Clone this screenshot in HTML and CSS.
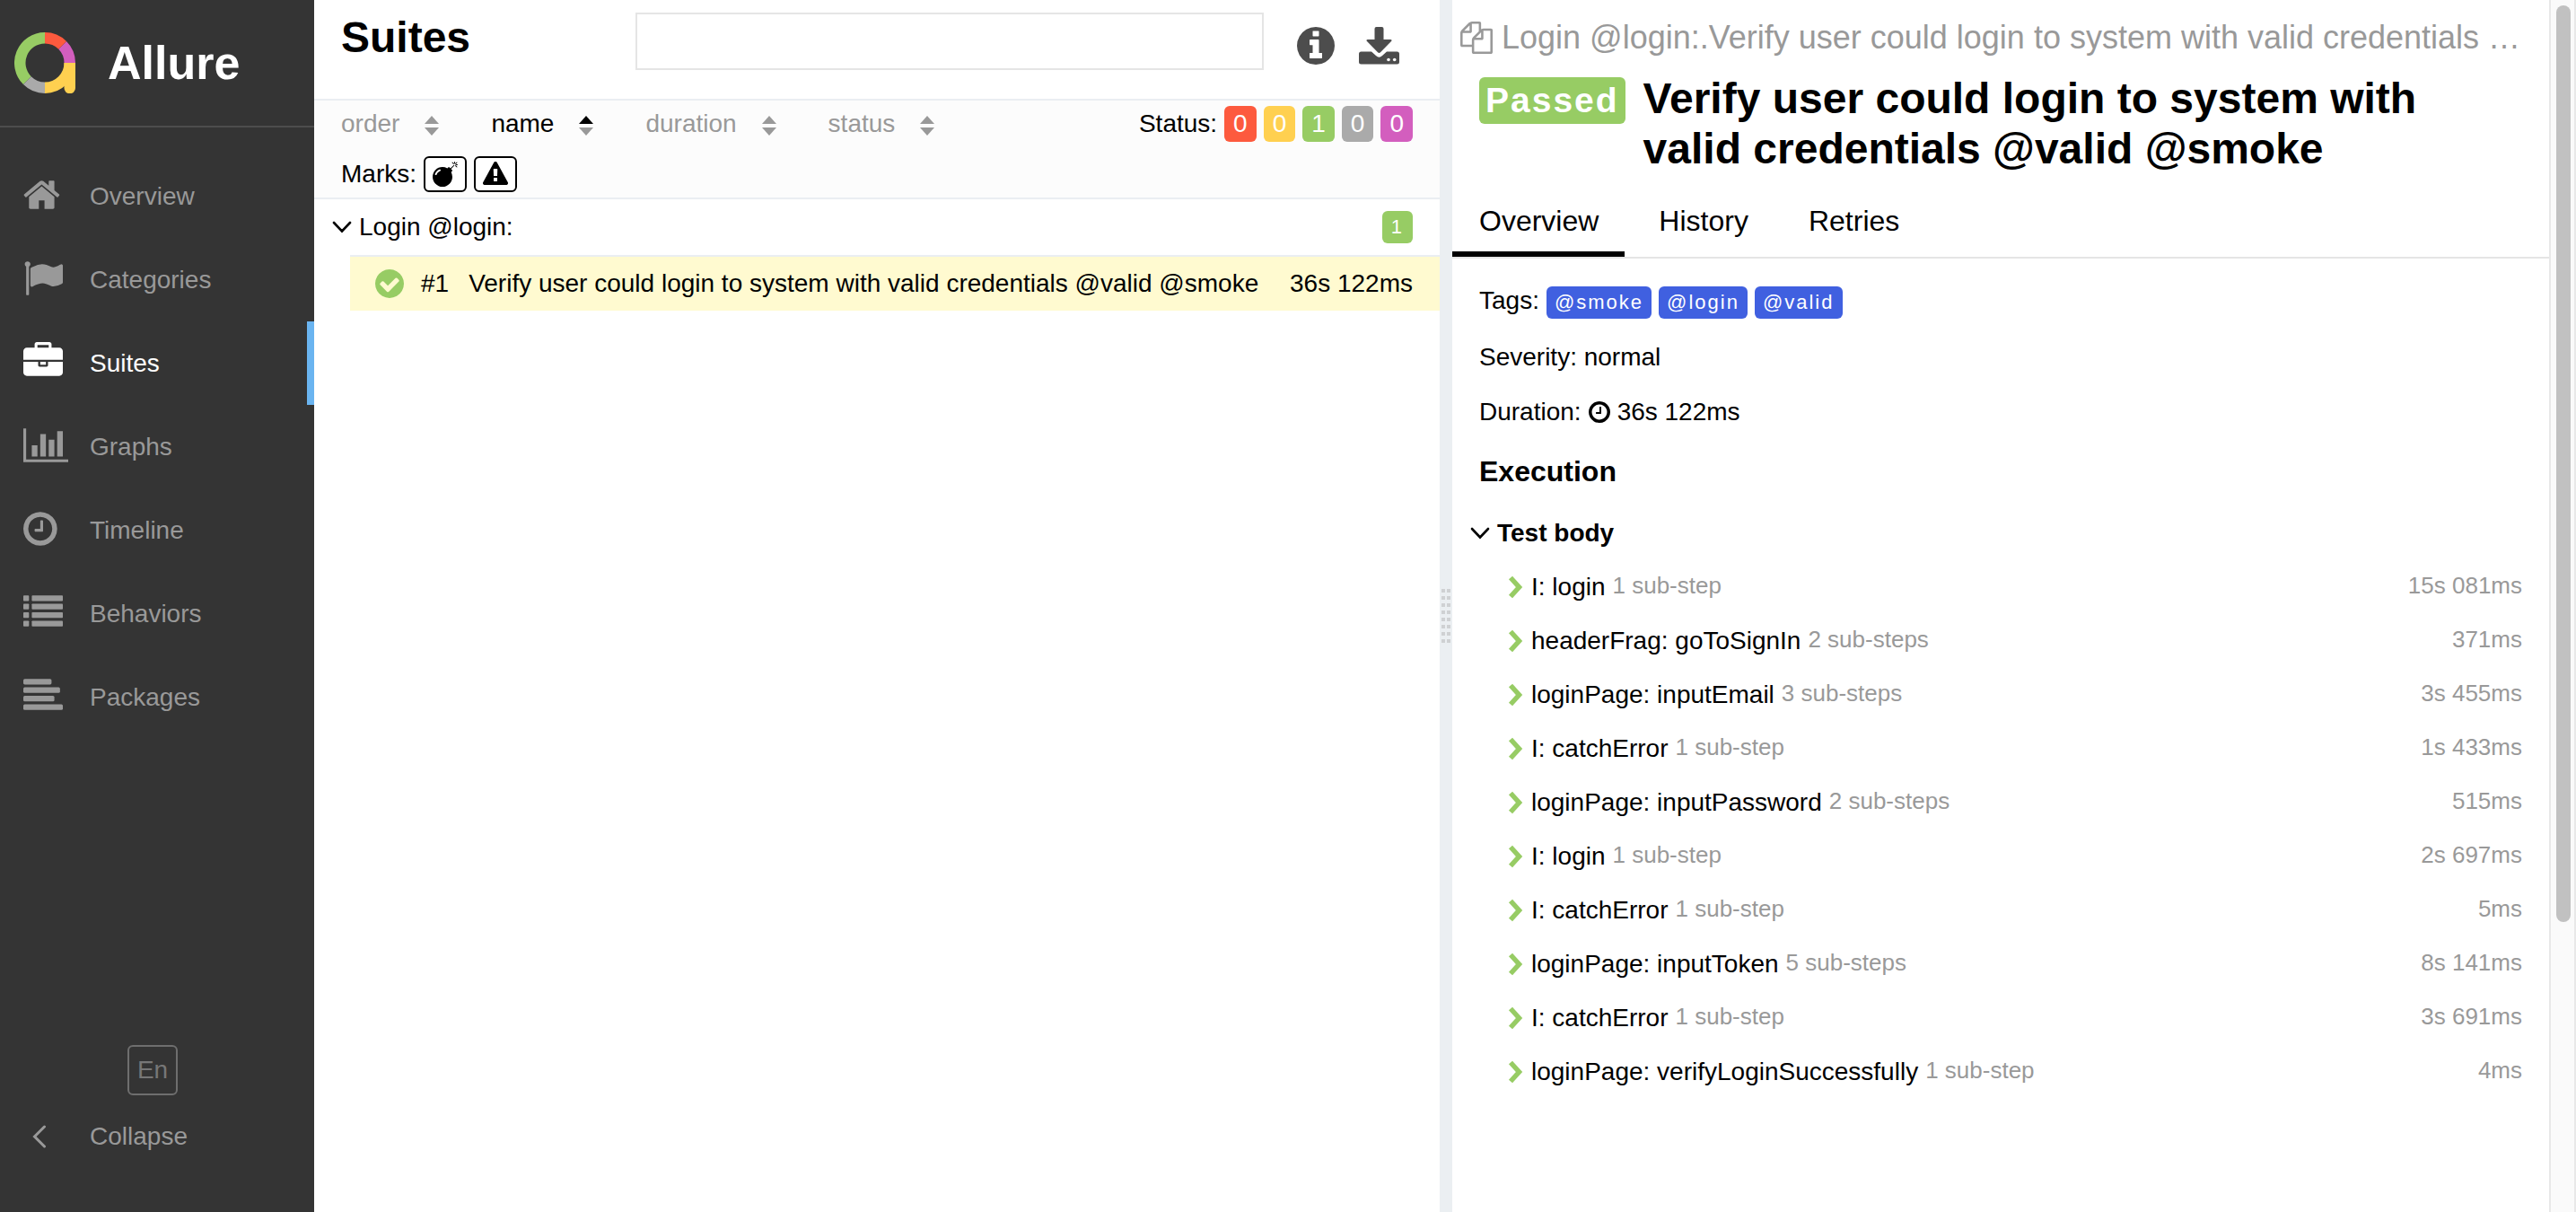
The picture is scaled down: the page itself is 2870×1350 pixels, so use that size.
FILE: index.html
```html
<!DOCTYPE html>
<html lang="en">
<head>
<meta charset="utf-8">
<title>Allure Report</title>
<meta name="viewport" content="width=device-width, initial-scale=1">
<link rel="stylesheet" href="styles.css">
</head>
<body>
<svg class="sprite" aria-hidden="true">
  <symbol id="angle-down" viewBox="0 0 22 14"><path d="M2 2l9 9.500l9-9.500" fill="none" stroke="currentColor" stroke-width="2.600" stroke-linecap="round"/></symbol>
  <symbol id="chevron" viewBox="0 0 18 26"><path d="M3 2.500L12.500 13L3 23.500" fill="none" stroke="currentColor" stroke-width="5.500"/></symbol>
  <symbol id="clock" viewBox="128 0 1792 1792"><path d="M1024 544v448q0 14-9 23t-23 9h-320q-14 0-23-9t-9-23v-64q0-14 9-23t23-9h224v-352q0-14 9-23t23-9h64q14 0 23 9t9 23zm416 352q0-148-73-273t-198-198-273-73-273 73-198 198-73 273 73 273 198 198 273 73 273-73 198-198 73-273zm224 0q0 209-103 385.500t-279.500 279.500-385.500 103-385.500-103-279.500-279.500-103-385.500 103-385.500 279.500-279.500 385.500-103 385.500 103 279.500 279.500 103 385.500z"/></symbol>
  <symbol id="sort" viewBox="0 0 16 22"><path d="M8 0l8 9H0z"/><path d="M8 22l8-9H0z"/></symbol>
</svg>
<div class="app">
  <aside class="side">
    <div class="brand">
      <svg class="brand-logo" viewBox="0 0 68 68" aria-hidden="true">
        <g fill="none" stroke-width="12.500">
          <path stroke="#97cc64" d="M34 6.250A27.750 27.750 0 0 0 14.380 53.620"/>
          <path stroke="#aaa" d="M14.380 53.620A27.750 27.750 0 0 0 34 61.750"/>
          <path stroke="#ffd050" d="M34 61.750A27.750 27.750 0 0 0 61.750 34"/>
          <path stroke="#d35ebe" d="M61.750 34A27.750 27.750 0 0 0 53.620 14.380"/>
          <path stroke="#fd5a3e" d="M53.620 14.380A27.750 27.750 0 0 0 34 6.250"/>
        </g>
        <path fill="#ffd050" d="M55.500 34H68v28a6.250 6.250 0 0 1-12.500 0z"/>
      </svg>
      <span class="brand-name">Allure</span>
    </div>
    <nav class="nav">
      <a class="nav-item" href="#overview">
        <svg class="nav-icon" viewBox="64 0 1792 1792" aria-hidden="true"><path d="M1472 992v480q0 26-19 45t-45 19h-384v-384h-256v384h-384q-26 0-45-19t-19-45v-480q0-1 .5-3t.5-3l575-474 575 474q1 2 1 6zm223-69l-62 74q-8 9-21 11h-3q-13 0-21-7l-692-577-692 577q-12 8-24 7-13-2-21-11l-62-74q-8-10-7-23.500t11-21.500l719-599q32-26 76-26t76 26l244 204v-195q0-14 9-23t23-9h192q14 0 23 9t9 23v408l219 182q10 8 11 21.500t-7 23.500z"/></svg>
        <span>Overview</span></a>
      <a class="nav-item" href="#categories">
        <svg class="nav-icon" viewBox="0 0 1792 1792" aria-hidden="true"><path d="M320 256q0 72-64 110v1266q0 13-9.500 22.500t-22.500 9.500h-64q-13 0-22.500-9.500t-9.500-22.500v-1266q-64-38-64-110 0-53 37.500-90.500t90.500-37.500 90.500 37.500 37.500 90.500zm1472 64v763q0 25-12.500 38.500t-39.500 27.500q-215 116-369 116-61 0-123.500-22t-108.500-48-115.500-48-142.500-22q-192 0-464 146-17 9-33 9-26 0-45-19t-19-45v-742q0-32 31-55 21-14 79-43 236-120 421-120 107 0 200 29t219 88q38 19 88 19 54 0 117.500-21t110-47 88-47 54.500-21q26 0 45 19t19 45z"/></svg>
        <span>Categories</span></a>
      <a class="nav-item nav-item-active" href="#suites" aria-current="page">
        <svg class="nav-icon" viewBox="0 0 1792 1792" aria-hidden="true"><path d="M640 256h512v-128h-512v128zm1152 640v480q0 66-47 113t-113 47h-1472q-66 0-113-47t-47-113v-480h672v160q0 26 19 45t45 19h320q26 0 45-19t19-45v-160h672zm-768 0v128h-256v-128h256zm768-480v384h-1792v-384q0-66 47-113t113-47h352v-160q0-40 28-68t68-28h576q40 0 68 28t28 68v160h352q66 0 113 47t47 113z"/></svg>
        <span>Suites</span></a>
      <a class="nav-item" href="#graphs">
        <svg class="nav-icon" viewBox="0 0 2048 1792" aria-hidden="true"><path d="M0 128h128v1408h1920v128H0zM384 896h256v512H384zM768 384h256v1024H768zM1152 640h256v768h-256zM1536 256h256v1152h-256z"/></svg>
        <span>Graphs</span></a>
      <a class="nav-item" href="#timeline">
        <svg class="nav-icon" viewBox="128 0 1792 1792" aria-hidden="true"><use href="#clock" x="128" y="0" width="1792" height="1792"/></svg>
        <span>Timeline</span></a>
      <a class="nav-item" href="#behaviors">
        <svg class="nav-icon" viewBox="0 0 1792 1792" aria-hidden="true"><rect y="128" width="256" height="256" rx="32"/><rect x="384" y="128" width="1408" height="256" rx="32"/><rect y="512" width="256" height="256" rx="32"/><rect x="384" y="512" width="1408" height="256" rx="32"/><rect y="896" width="256" height="256" rx="32"/><rect x="384" y="896" width="1408" height="256" rx="32"/><rect y="1280" width="256" height="256" rx="32"/><rect x="384" y="1280" width="1408" height="256" rx="32"/></svg>
        <span>Behaviors</span></a>
      <a class="nav-item" href="#packages">
        <svg class="nav-icon" viewBox="0 0 1792 1792" aria-hidden="true"><rect y="128" width="1280" height="256" rx="64"/><rect y="512" width="1664" height="256" rx="64"/><rect y="896" width="1408" height="256" rx="64"/><rect y="1280" width="1792" height="256" rx="64"/></svg>
        <span>Packages</span></a>
    </nav>
    <div class="side-footer">
      <button class="lang" type="button">En</button>
      <button class="collapse" type="button">
        <svg class="collapse-icon" viewBox="0 0 16 26" aria-hidden="true"><path d="M13.500 2L2.500 13l11 11" fill="none" stroke="currentColor" stroke-width="3" stroke-linecap="round"/></svg>
        <span>Collapse</span></button>
    </div>
  </aside>

  <div class="content">
    <main class="tree">
      <header class="tree-header">
        <h1 class="tree-title">Suites</h1>
        <input class="search" type="search" aria-label="Search">
        <div class="tools">
          <button class="tool" type="button" aria-label="Show info">
            <svg class="info-icon" viewBox="128 128 1536 1536"><path d="M1152 1376v-160q0-14-9-23t-23-9h-96v-512q0-14-9-23t-23-9h-320q-14 0-23 9t-9 23v160q0 14 9 23t23 9h96v320h-96q-14 0-23 9t-9 23v160q0 14 9 23t23 9h448q14 0 23-9t9-23zm-128-896v-160q0-14-9-23t-23-9h-192q-14 0-23 9t-9 23v160q0 14 9 23t23 9h192q14 0 23-9t9-23zm640 416q0 209-103 385.500t-279.500 279.500-385.500 103-385.500-103-279.500-279.500-103-385.500 103-385.500 279.500-279.500 385.500-103 385.500 103 279.500 279.500 103 385.500z"/></svg></button>
          <button class="tool" type="button" aria-label="Download">
            <svg class="download-icon" viewBox="0 0 45 42"><path d="M2.500 27.500H14l5 4.600q3.500 3.300 7 0l5-4.600h11.500a2.500 2.500 0 0 1 2.500 2.500v9a2.500 2.500 0 0 1-2.500 2.500h-40A2.500 2.500 0 0 1 0 39v-9a2.500 2.500 0 0 1 2.500-2.500z"/><path d="M19.500 0h6a2 2 0 0 1 2 2v12H35q2.500.2 1 2L24 28.300q-1.500 1.400-3 0L9 16q-1.500-1.800 1-2h7.500V2a2 2 0 0 1 2-2z"/><circle cx="33" cy="36.500" r="1.800" fill="#fff"/><circle cx="39.700" cy="36.500" r="1.800" fill="#fff"/></svg></button>
        </div>
      </header>
      <section class="filters">
        <div class="filter-row">
          <div class="sorter">
            <button class="sort" type="button">order <svg class="sort-icon" aria-hidden="true"><use href="#sort"/></svg></button>
            <button class="sort sort-active" type="button">name <svg class="sort-icon" aria-hidden="true" viewBox="0 0 16 22"><path fill="#000" d="M8 0l8 9H0z"/><path d="M8 22l8-9H0z"/></svg></button>
            <button class="sort" type="button">duration <svg class="sort-icon" aria-hidden="true"><use href="#sort"/></svg></button>
            <button class="sort" type="button">status <svg class="sort-icon" aria-hidden="true"><use href="#sort"/></svg></button>
          </div>
          <div class="filter-group">
            <span>Status:</span>
            <button class="count failed" type="button" aria-label="Failed">0</button>
            <button class="count broken" type="button" aria-label="Broken">0</button>
            <button class="count passed" type="button" aria-label="Passed">1</button>
            <button class="count skipped" type="button" aria-label="Skipped">0</button>
            <button class="count unknown" type="button" aria-label="Unknown">0</button>
          </div>
        </div>
        <div class="filter-group">
          <span>Marks:</span>
          <button class="mark" type="button" aria-label="Flaky"><svg class="mark-icon" viewBox="0 0 1792 1792"><path d="M571 589q-10-25-34-35t-49 0q-108 44-191 127t-127 191q-10 25 0 49t35 34q13 5 24 5 42 0 60-40 34-84 98.500-148.500t148.500-98.500q25-11 35-35t0-49zm942-356l46 46-244 243 68 68q19 19 19 45.500t-19 45.500l-64 64q89 161 89 343 0 143-55.500 273.500t-150 225-225 150-273.500 55.500-273.500-55.500-225-150-150-225-55.500-273.500 55.500-273.500 150-225 225-150 273.500-55.500q182 0 343 89l64-64q19-19 45.500-19t45.500 19l68 68zm8-56q-10 10-22 10-13 0-23-10l-91-90q-9-10-9-23t9-23q10-9 23-9t23 9l90 91q10 9 10 22.500t-10 22.500zm230 230q-11 9-23 9t-23-9l-90-91q-10-9-10-22.500t10-22.500q9-10 22.500-10t22.500 10l91 90q9 10 9 23t-9 23zm41-183q0 14-9 23t-23 9h-96q-14 0-23-9t-9-23 9-23 23-9h96q14 0 23 9t9 23zm-192-192v96q0 14-9 23t-23 9-23-9-9-23v-96q0-14 9-23t23-9 23 9 9 23zm151 55l-91 90q-10 10-22 10-13 0-23-10-10-9-10-22.500t10-22.500l90-91q10-9 23-9t23 9q9 10 9 23t-9 23z"/></svg></button>
          <button class="mark" type="button" aria-label="New failed"><svg class="mark-icon" viewBox="0 0 1792 1792"><path d="M1024 1375v-190q0-14-9.500-23.500t-22.500-9.500h-192q-13 0-22.500 9.500t-9.500 23.500v190q0 14 9.500 23.500t22.500 9.500h192q13 0 22.500-9.500t9.500-23.500zm-2-374l18-459q0-12-10-19-13-11-24-11h-220q-11 0-24 11-10 7-10 21l17 457q0 10 10 16.500t24 6.500h185q14 0 23.500-6.500t10.500-16.500zm-14-934l768 1408q35 63-2 126-17 29-46.500 46t-63.500 17h-1536q-34 0-63.500-17t-46.500-46q-37-63-2-126l768-1408q17-31 47-49t65-18 65 18 47 49z"/></svg></button>
        </div>
      </section>
      <section class="suite">
        <button class="suite-head" type="button" aria-expanded="true">
          <svg class="angle" aria-hidden="true"><use href="#angle-down"/></svg>
          <span class="suite-name">Login @login:</span>
          <span class="label suite-count passed">1</span>
        </button>
        <a class="case" href="#suites/case">
          <svg class="case-icon" viewBox="128 128 1536 1536" aria-hidden="true"><path d="M1412 734q0-28-18-46l-91-90q-19-19-45-19t-45 19l-408 407-226-226q-19-19-45-19t-45 19l-91 90q-18 18-18 46 0 27 18 45l362 362q19 19 45 19 27 0 46-19l543-543q18-18 18-45zm252 162q0 209-103 385.500t-279.500 279.500-385.500 103-385.500-103-279.500-279.500-103-385.500 103-385.500 279.500-279.500 385.500-103 385.500 103 279.500 279.500 103 385.500z"/></svg>
          <span class="case-order">#1</span>
          <span class="case-name">Verify user could login to system with valid credentials @valid @smoke</span>
          <span>36s 122ms</span>
        </a>
      </section>
    </main>

    <div class="gutter"><div class="grip"></div></div>

    <article class="result">
      <div class="crumb">
        <svg class="crumb-icon" viewBox="0 0 1792 1792" aria-hidden="true"><path d="M1696 384q40 0 68 28t28 68v1216q0 40-28 68t-68 28h-960q-40 0-68-28t-28-68v-288h-544q-40 0-68-28t-28-68v-672q0-40 20-88t48-76l408-408q28-28 76-48t88-20h416q40 0 68 28t28 68v328q68-40 128-40h416zm-544 213l-299 299h299v-299zm-640-384l-299 299h299v-299zm196 647l316-316v-416h-384v416q0 40-28 68t-68 28h-416v640h512v-256q0-40 20-88t48-76zm956 804v-1152h-384v416q0 40-28 68t-68 28h-416v640h896z"/></svg>
        <span class="crumb-text">Login @login:.Verify user could login to system with valid credentials @valid @smoke</span>
      </div>
      <div class="result-head">
        <span class="result-status passed">Passed</span>
        <h2 class="result-title">Verify user could login to system with valid credentials @valid @smoke</h2>
      </div>
      <nav class="tabs">
        <a class="tab tab-active" href="#tab-overview" aria-current="page">Overview</a>
        <a class="tab" href="#tab-history">History</a>
        <a class="tab" href="#tab-retries">Retries</a>
      </nav>
      <div class="facts">
        <div class="fact">Tags: <span class="label tag">@smoke</span><span class="label tag">@login</span><span class="label tag">@valid</span></div>
        <div class="fact">Severity: normal</div>
        <div class="fact">Duration: <svg class="fact-icon" viewBox="128 128 1536 1536" aria-hidden="true"><use href="#clock" x="128" y="0" width="1792" height="1792"/></svg> 36s 122ms</div>
      </div>
      <h3 class="execution">Execution</h3>
      <button class="stage" type="button" aria-expanded="true"><svg class="angle" aria-hidden="true"><use href="#angle-down"/></svg>Test body</button>
      <ul class="steps">
        <li><button class="step" type="button"><svg class="step-icon" aria-hidden="true"><use href="#chevron"/></svg><span>I: login</span><span class="minor">1 sub-step</span><span class="minor time">15s 081ms</span></button></li>
        <li><button class="step" type="button"><svg class="step-icon" aria-hidden="true"><use href="#chevron"/></svg><span>headerFrag: goToSignIn</span><span class="minor">2 sub-steps</span><span class="minor time">371ms</span></button></li>
        <li><button class="step" type="button"><svg class="step-icon" aria-hidden="true"><use href="#chevron"/></svg><span>loginPage: inputEmail</span><span class="minor">3 sub-steps</span><span class="minor time">3s 455ms</span></button></li>
        <li><button class="step" type="button"><svg class="step-icon" aria-hidden="true"><use href="#chevron"/></svg><span>I: catchError</span><span class="minor">1 sub-step</span><span class="minor time">1s 433ms</span></button></li>
        <li><button class="step" type="button"><svg class="step-icon" aria-hidden="true"><use href="#chevron"/></svg><span>loginPage: inputPassword</span><span class="minor">2 sub-steps</span><span class="minor time">515ms</span></button></li>
        <li><button class="step" type="button"><svg class="step-icon" aria-hidden="true"><use href="#chevron"/></svg><span>I: login</span><span class="minor">1 sub-step</span><span class="minor time">2s 697ms</span></button></li>
        <li><button class="step" type="button"><svg class="step-icon" aria-hidden="true"><use href="#chevron"/></svg><span>I: catchError</span><span class="minor">1 sub-step</span><span class="minor time">5ms</span></button></li>
        <li><button class="step" type="button"><svg class="step-icon" aria-hidden="true"><use href="#chevron"/></svg><span>loginPage: inputToken</span><span class="minor">5 sub-steps</span><span class="minor time">8s 141ms</span></button></li>
        <li><button class="step" type="button"><svg class="step-icon" aria-hidden="true"><use href="#chevron"/></svg><span>I: catchError</span><span class="minor">1 sub-step</span><span class="minor time">3s 691ms</span></button></li>
        <li><button class="step" type="button"><svg class="step-icon" aria-hidden="true"><use href="#chevron"/></svg><span>loginPage: verifyLoginSuccessfully</span><span class="minor">1 sub-step</span><span class="minor time">4ms</span></button></li>
      </ul>
    </article>
    <div class="scroll"><div class="scroll-thumb"></div></div>
  </div>
</div>
</body>
</html>
```
FILE: styles.css
```css
*,
*::before,
*::after {
  box-sizing: border-box;
}

body {
  margin: 0;
  background: #fff;
  color: #000;
  font: 28px/36px "Liberation Sans", Arial, Helvetica, sans-serif;
}

h1,
h2,
h3,
ul {
  margin: 0;
  padding: 0;
}

ul {
  list-style: none;
}

a {
  color: inherit;
  text-decoration: none;
}

button {
  margin: 0;
  padding: 0;
  border: 0;
  background: none;
  color: inherit;
  font: inherit;
  text-align: left;
  cursor: pointer;
}

svg {
  display: block;
  flex: none;
  fill: currentColor;
}

.sprite {
  position: absolute;
  width: 0;
  height: 0;
}

.app {
  display: flex;
  min-height: 100vh;
}

/* Sidebar */

.side {
  display: flex;
  flex: 0 0 350px;
  flex-direction: column;
  background: #343434;
  color: #999;
}

.brand {
  display: flex;
  align-items: center;
  gap: 36px;
  height: 142px;
  padding-left: 16px;
  border-bottom: 2px solid #4d4d4d;
}

.brand-logo {
  width: 68px;
  height: 68px;
}

.brand-name {
  color: #fff;
  font-size: 52px;
  font-weight: bold;
  line-height: 60px;
}

.nav {
  padding-top: 30px;
}

.nav-item {
  display: grid;
  grid-template-columns: 74px 1fr;
  align-items: center;
  height: 93px;
  padding-left: 26px;
}

.nav-item-active {
  border-right: 8px solid #6ab4f0;
  color: #fff;
}

.nav-icon {
  height: 48px;
  padding-bottom: 4px;
}

.side-footer {
  margin-top: auto;
  padding-bottom: 66px;
}

.lang {
  display: block;
  width: 56px;
  height: 56px;
  margin: 0 0 28px 142px;
  border: 2px solid #6e6e6e;
  border-radius: 6px;
  color: #777;
  line-height: 48px;
  text-align: center;
}

.collapse {
  display: grid;
  grid-template-columns: 64px 1fr;
  align-items: center;
  width: 100%;
  padding-left: 36px;
}

.collapse-icon {
  width: 16px;
  height: 26px;
}

/* Suites tree */

.content {
  display: flex;
  flex: 1;
  min-width: 0;
}

.tree {
  flex: 0 0 calc(50% - 6px);
  min-width: 0;
}

.tree-header {
  display: grid;
  grid-template-columns: 328px 1fr auto;
  align-items: start;
  height: 112px;
  padding: 14px 45px 0 30px;
  border-bottom: 2px solid #eaeef2;
}

.tree-title {
  font-size: 48px;
  line-height: 56px;
}

.search {
  width: 100%;
  height: 64px;
  padding: 0 16px;
  border: 2px solid #e5e5e5;
  border-radius: 0;
  background: #fff;
  font: inherit;
}

.tools {
  display: flex;
  align-items: flex-end;
  gap: 27px;
  padding: 16px 0 0 37px;
}

.tool {
  color: #4d4d4d;
}

.info-icon {
  width: 42px;
  height: 42px;
}

.download-icon {
  width: 45px;
  height: 42px;
}

.filters {
  display: grid;
  gap: 16px;
  padding: 6px 30px;
  border-bottom: 2px solid #eaeef2;
  background: #fcfcfc;
}

.filter-row {
  display: flex;
  justify-content: space-between;
}

.sorter {
  display: flex;
  gap: 58px;
}

.sort {
  display: flex;
  align-items: center;
  gap: 28px;
  color: #999;
}

.sort-active {
  color: #000;
}

.sort-icon {
  width: 16px;
  height: 22px;
  margin-top: 4px;
  color: #999;
}

.filter-group {
  display: flex;
  align-items: center;
  gap: 8px;
}

.count {
  height: 40px;
  padding: 0 10px;
  border-radius: 6px;
  color: #fff;
  line-height: 40px;
}

.failed {
  background: #fd5a3e;
}

.broken {
  background: #ffd050;
}

.passed {
  background: #97cc64;
}

.skipped {
  background: #aaa;
}

.unknown {
  background: #d35ebe;
}

.mark {
  display: grid;
  place-items: center;
  width: 48px;
  height: 40px;
  border: 2px solid #000;
  border-radius: 6px;
  background: #fff;
}

.mark-icon {
  width: 28px;
  height: 28px;
}

.suite-head {
  display: flex;
  align-items: center;
  width: 100%;
  height: 62px;
  padding: 0 30px 0 20px;
}

.angle {
  width: 22px;
  height: 14px;
}

.suite-name {
  flex: 1;
  padding-left: 8px;
}

.label {
  padding: 0 9px;
  border-radius: 6px;
  color: #fff;
  font-size: 22px;
  letter-spacing: 2px;
  line-height: 36px;
}

.suite-count {
  padding: 0 10px;
}

.case {
  display: flex;
  align-items: center;
  height: 62px;
  margin-left: 40px;
  padding: 0 30px 0 28px;
  border-top: 2px solid #eaeef2;
  background: #fffad0;
}

.case-icon {
  width: 32px;
  height: 32px;
  color: #97cc64;
}

.case-order {
  padding: 0 22px 0 19px;
}

.case-name {
  flex: 1;
}

.gutter {
  display: grid;
  flex: 0 0 14px;
  place-items: center;
  background: #ebeff2;
}

.grip {
  width: 10px;
  height: 60px;
  margin-top: 22px;
  background:
    linear-gradient(#ebeff2, #ebeff2) center / 2px 100% no-repeat,
    repeating-linear-gradient(#cfd1d3 0 4px, #ebeff2 4px 8px);
}

/* Test result */

.result {
  flex: 1;
  min-width: 0;
}

.crumb {
  display: flex;
  align-items: center;
  gap: 10px;
  height: 82px;
  padding: 2px 28px 0 9px;
  color: #999;
  font-size: 36px;
  line-height: 46px;
}

.crumb-icon {
  width: 36px;
  height: 36px;
}

.crumb-text {
  overflow: hidden;
  text-overflow: ellipsis;
  white-space: nowrap;
}

.result-head {
  display: flex;
  align-items: flex-start;
  gap: 20px;
  padding: 0 30px;
}

.result-status {
  margin-top: 4px;
  padding: 0 7px;
  border-radius: 6px;
  color: #fff;
  font-size: 39px;
  font-weight: bold;
  letter-spacing: 2px;
  line-height: 52px;
}

.result-title {
  font-size: 48px;
  line-height: 56px;
}

.tabs {
  display: flex;
  gap: 8px;
  border-bottom: 2px solid #e5e5e5;
}

.tab {
  padding: 32px 29px 14px 30px;
  border-bottom: 6px solid transparent;
  font-size: 32px;
  line-height: 40px;
}

.tab-active {
  border-bottom-color: #000;
}

.facts {
  display: grid;
  gap: 25px;
  padding: 29px 30px 0;
}

.fact {
  display: flex;
  align-items: baseline;
  gap: 8px;
}

.tag {
  background: #4060e0;
}

.fact-icon {
  align-self: center;
  width: 24px;
  height: 24px;
}

.execution {
  padding: 29px 30px 20px;
  font-size: 32px;
  line-height: 38px;
}

.stage {
  display: flex;
  align-items: center;
  gap: 8px;
  width: 100%;
  height: 60px;
  padding-left: 20px;
  font-weight: bold;
}

.step {
  display: flex;
  align-items: center;
  gap: 8px;
  width: 100%;
  height: 60px;
  padding: 0 30px 0 62px;
}

.step-icon {
  width: 18px;
  height: 26px;
  color: #97cc64;
}

.minor {
  padding-bottom: 4px;
  color: #999;
  font-size: 26px;
}

.time {
  margin-left: auto;
}

.scroll {
  flex: 0 0 30px;
  padding: 6px 4px 0 6px;
  border: solid #e8e8e8;
  border-width: 0 2px;
  background: #fafafa;
}

.scroll-thumb {
  width: 16px;
  height: 76%;
  border-radius: 8px;
  background: #c1c1c1;
}
```
